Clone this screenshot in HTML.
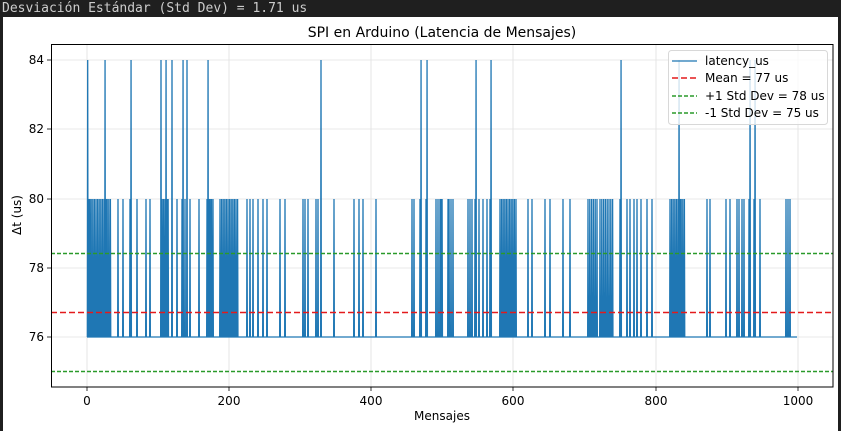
<!DOCTYPE html>
<html><head><meta charset="utf-8"><style>
html,body{margin:0;padding:0;width:841px;height:431px;overflow:hidden;background:#1f1f1f}
#bar{position:absolute;left:0;top:0;width:841px;height:17px;font-family:"DejaVu Sans Mono","Liberation Mono",monospace;font-size:13px;line-height:17px;color:#cccccc;padding-left:2px;white-space:pre}
#fig{position:absolute;left:3px;top:17px;width:835px;height:414px;background:#fff}
svg{position:absolute;left:0;top:0}
text{font-family:"DejaVu Sans","Liberation Sans",sans-serif;fill:#000}
</style></head><body>
<div id="bar">Desviación Estándar (Std Dev) = 1.71 us</div>
<div id="fig"></div>
<svg width="841" height="431" viewBox="0 0 841 431">
<g stroke="#e0e0e0" stroke-width="0.8">
<line x1="87" y1="44" x2="87" y2="387"/><line x1="229" y1="44" x2="229" y2="387"/><line x1="371" y1="44" x2="371" y2="387"/><line x1="513" y1="44" x2="513" y2="387"/><line x1="656" y1="44" x2="656" y2="387"/><line x1="798" y1="44" x2="798" y2="387"/>
<line x1="51" y1="60" x2="833" y2="60"/><line x1="51" y1="129" x2="833" y2="129"/><line x1="51" y1="199" x2="833" y2="199"/><line x1="51" y1="268" x2="833" y2="268"/><line x1="51" y1="337" x2="833" y2="337"/>
</g>
<path id="data" fill="none" stroke="#1f77b4" stroke-width="1.3" stroke-linejoin="miter" d=""/>
<line x1="51" y1="312.5" x2="833" y2="312.5" stroke="#e31a1c" stroke-width="1.6" stroke-dasharray="6,3"/>
<line x1="51" y1="253.5" x2="833" y2="253.5" stroke="#2a9a2a" stroke-width="1.5" stroke-dasharray="4,2"/>
<line x1="51" y1="371.5" x2="833" y2="371.5" stroke="#2a9a2a" stroke-width="1.5" stroke-dasharray="4,2"/>
<rect x="51.5" y="44.5" width="781.5" height="342.5" fill="none" stroke="#000" stroke-width="1"/>
<g stroke="#000" stroke-width="0.8">
<line x1="47" y1="60" x2="51" y2="60"/><line x1="47" y1="129" x2="51" y2="129"/><line x1="47" y1="199" x2="51" y2="199"/><line x1="47" y1="268" x2="51" y2="268"/><line x1="47" y1="337" x2="51" y2="337"/>
<line x1="87" y1="387" x2="87" y2="391"/><line x1="229" y1="387" x2="229" y2="391"/><line x1="371" y1="387" x2="371" y2="391"/><line x1="513" y1="387" x2="513" y2="391"/><line x1="656" y1="387" x2="656" y2="391"/><line x1="798" y1="387" x2="798" y2="391"/>
</g>
<g font-size="12" text-anchor="end">
<text x="44" y="64">84</text><text x="44" y="133">82</text><text x="44" y="203">80</text><text x="44" y="272">78</text><text x="44" y="341">76</text>
</g>
<g font-size="12" text-anchor="middle">
<text x="87" y="405">0</text><text x="229" y="405">200</text><text x="371" y="405">400</text><text x="513" y="405">600</text><text x="656" y="405">800</text><text x="798" y="405">1000</text>
<text x="442" y="420">Mensajes</text>
<text x="442" y="37" font-size="14">SPI en Arduino (Latencia de Mensajes)</text>
<text transform="translate(21,215) rotate(-90)">Δt (us)</text>
</g>
<rect x="668.5" y="50.5" width="159" height="74" rx="3" fill="#fff" fill-opacity="0.8" stroke="#d8d8d8" stroke-width="1"/>
<line x1="672" y1="61" x2="697" y2="61" stroke="#1f77b4" stroke-width="1.3"/>
<line x1="672" y1="78" x2="697" y2="78" stroke="#e31a1c" stroke-width="1.6" stroke-dasharray="6,3"/>
<line x1="672" y1="96" x2="697" y2="96" stroke="#2a9a2a" stroke-width="1.5" stroke-dasharray="4,2"/>
<line x1="672" y1="113" x2="697" y2="113" stroke="#2a9a2a" stroke-width="1.5" stroke-dasharray="4,2"/>
<g font-size="12"><text x="705" y="65">latency_us</text><text x="705" y="82">Mean = 77 us</text><text x="705" y="100">+1 Std Dev = 78 us</text><text x="705" y="117">-1 Std Dev = 75 us</text></g>
</svg>
<script>
(function(){
var hi=[86.7,104,130,161,166,172,182,187,207,321,420,426,475,490,620,679,749,754];
var lo=[];
function dense(a,b,step){for(var x=a;x<=b;x+=step)lo.push(x);}
dense(88,111,1.6);
[118,123,130,137,146,150].forEach(function(v){lo.push(v)});
dense(162,168,1.5);
[177,182,185,190,199].forEach(function(v){lo.push(v)});
dense(207,213,1.5);dense(220,238,1.6);
[247,250,253,258,263,267,280,285,303,305,308,316,318,334,354,359,363,376,412,414,420,426,436,438,440,448,440,442,449,451,453,468,470,472,475,479,483,487,490].forEach(function(v){lo.push(v)});
dense(500,517,1.6);
[528,532,545,550,563,570].forEach(function(v){lo.push(v)});
dense(588,597,1.8);dense(600,613,1.8);
[620,627,630,634,637,641,647,652].forEach(function(v){lo.push(v)});
dense(670,685,1.6);
[707,710,726,730,737,739,742,744,749,754,760,786,788,790].forEach(function(v){lo.push(v)});
var pts=[];
lo.forEach(function(x){pts.push([x,199])});
hi.forEach(function(x){pts.push([x,60])});
pts.sort(function(a,b){return a[0]-b[0]});
var d="M87 337";
var last=87;
pts.forEach(function(p){
 var x=Math.max(p[0],last+0.7);
 d+=" L"+(x-0.35).toFixed(2)+" 337 L"+x.toFixed(2)+" "+p[1]+" L"+(x+0.35).toFixed(2)+" 337";
 last=x+0.35;
});
d+=" L797 337";
document.getElementById("data").setAttribute("d",d);
})();
</script>
</body></html>
